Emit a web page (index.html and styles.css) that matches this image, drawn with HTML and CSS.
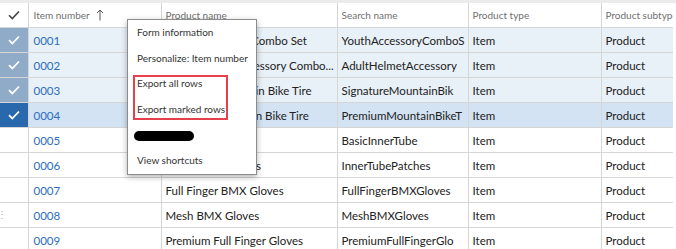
FILE: index.html
```html
<!DOCTYPE html>
<html lang="en">
<head>
  <meta charset="UTF-8" />
  <title>Released products</title>
  <link rel="stylesheet" href="styles.css">
</head>
<body>

  <div class="topband"></div>

  <div class="grid-wrap">
    <table class="grid">
      <colgroup>
        <col class="c-check" />
        <col class="c-item" />
        <col class="c-name" />
        <col class="c-search" />
        <col class="c-type" />
        <col class="c-subtype" />
      </colgroup>
      <thead>
        <tr>
          <th class="check-cell">
            <svg width="12" height="10" viewBox="0 0 12 10"><path d="M1 5.2 L4.3 8.5 L11 1.5" fill="none" stroke="#444" stroke-width="1.6"/></svg>
          </th>
          <th>Item number
            <svg class="sort" width="8" height="12" viewBox="0 0 8 12"><path d="M4 11.5 V1 M1 4 L4 1 L7 4" fill="none" stroke="#555" stroke-width="1"/></svg>
          </th>
          <th>Product name</th>
          <th>Search name</th>
          <th>Product type</th>
          <th>Product subtype</th>
        </tr>
      </thead>
      <tbody>
        <tr class="marked">
          <td class="check-cell"><svg width="12" height="10" viewBox="0 0 12 10"><path d="M1 5.2 L4.3 8.5 L11 1.5" fill="none" stroke="#fff" stroke-width="1.8"/></svg></td>
          <td><a href="#">0001</a></td>
          <td>Youth Accessory Combo Set</td>
          <td>YouthAccessoryComboS</td>
          <td>Item</td>
          <td>Product</td>
        </tr>
        <tr class="marked">
          <td class="check-cell"><svg width="12" height="10" viewBox="0 0 12 10"><path d="M1 5.2 L4.3 8.5 L11 1.5" fill="none" stroke="#fff" stroke-width="1.8"/></svg></td>
          <td><a href="#">0002</a></td>
          <td>Adult Helmet Accessory Combo...</td>
          <td>AdultHelmetAccessory</td>
          <td>Item</td>
          <td>Product</td>
        </tr>
        <tr class="marked">
          <td class="check-cell"><svg width="12" height="10" viewBox="0 0 12 10"><path d="M1 5.2 L4.3 8.5 L11 1.5" fill="none" stroke="#fff" stroke-width="1.8"/></svg></td>
          <td><a href="#">0003</a></td>
          <td>Signature Mountain Bike Tire</td>
          <td>SignatureMountainBik</td>
          <td>Item</td>
          <td>Product</td>
        </tr>
        <tr class="marked active">
          <td class="check-cell"><svg width="12" height="10" viewBox="0 0 12 10"><path d="M1 5.2 L4.3 8.5 L11 1.5" fill="none" stroke="#fff" stroke-width="1.8"/></svg></td>
          <td><a href="#">0004</a></td>
          <td>Premium Mountain Bike Tire</td>
          <td>PremiumMountainBikeT</td>
          <td>Item</td>
          <td>Product</td>
        </tr>
        <tr>
          <td class="check-cell"></td>
          <td><a href="#">0005</a></td>
          <td>Basic Inner Tube</td>
          <td>BasicInnerTube</td>
          <td>Item</td>
          <td>Product</td>
        </tr>
        <tr>
          <td class="check-cell"></td>
          <td><a href="#">0006</a></td>
          <td>Inner Tube Patches</td>
          <td>InnerTubePatches</td>
          <td>Item</td>
          <td>Product</td>
        </tr>
        <tr>
          <td class="check-cell"></td>
          <td><a href="#">0007</a></td>
          <td>Full Finger BMX Gloves</td>
          <td>FullFingerBMXGloves</td>
          <td>Item</td>
          <td>Product</td>
        </tr>
        <tr>
          <td class="check-cell"></td>
          <td><a href="#">0008</a></td>
          <td>Mesh BMX Gloves</td>
          <td>MeshBMXGloves</td>
          <td>Item</td>
          <td>Product</td>
        </tr>
        <tr>
          <td class="check-cell"></td>
          <td><a href="#">0009</a></td>
          <td>Premium Full Finger Gloves</td>
          <td>PremiumFullFingerGlo</td>
          <td>Item</td>
          <td>Product</td>
        </tr>
      </tbody>
    </table>

    <div class="grip">⋮</div>

    <div class="context-menu">
      <div class="menu-item">Form information</div>
      <div class="menu-item">Personalize: Item number</div>
      <div class="menu-item">Export all rows</div>
      <div class="menu-item">Export marked rows</div>
      <div class="menu-item"><span class="redacted"></span></div>
      <div class="menu-item">View shortcuts</div>
      <div class="highlight"></div>
    </div>
  </div>

</body>
</html>
```

FILE: styles.css
```css
body {
  margin: 0;
  background: #fff;
  font-family: "Lato", "Open Sans", sans-serif;
  color: #222;
}

.topband {
  height: 3px;
  background: #ebebeb;
}

.grid-wrap {
  position: relative;
  width: 673px;
  overflow: hidden;
}

.grid {
  border-collapse: collapse;
  table-layout: fixed;
  width: 740px;
  font-size: 11.5px;
}

.c-check { width: 28px; }
.c-item { width: 133px; }
.c-name { width: 176px; }
.c-search { width: 131px; }
.c-type { width: 133px; }
.c-subtype { width: 139px; }

.grid th,
.grid td {
  height: 24px;
  padding: 0 4px;
  border-right: 1px solid #d6d6d6;
  border-bottom: 1px solid #d6d6d6;
  white-space: nowrap;
  overflow: hidden;
  text-align: left;
  vertical-align: middle;
}

.grid th {
  font-size: 10px;
  font-weight: normal;
  color: #707070;
  background: #fff;
}

.grid td:nth-child(2),
.grid th:nth-child(2) {
  padding-left: 5px;
}

.grid .check-cell {
  padding: 0;
  text-align: center;
}

.check-cell svg {
  display: block;
  margin: 0 auto;
}

.sort {
  margin-left: 4px;
  vertical-align: -2px;
}

.grid a {
  color: #2a6ebd;
  text-decoration: none;
}

tr.marked td {
  background: #e8f0f8;
}

tr.marked td.check-cell {
  background: #8fabc8;
}

tr.active td {
  background: #d3e3f3;
}

tr.active td.check-cell {
  background: #2a68ae;
}

.grip {
  position: absolute;
  left: -3px;
  top: 205px;
  font-size: 10px;
  color: #b0b0b0;
}

.context-menu {
  position: absolute;
  left: 127px;
  top: 16px;
  width: 128px;
  background: #fff;
  border: 1px solid #8c8c8c;
  box-shadow: 0 2px 6px rgba(0, 0, 0, 0.3);
  font-size: 10px;
  color: #333;
}

.menu-item {
  height: 25.6px;
  line-height: 25.6px;
  padding-left: 9px;
  white-space: nowrap;
}

.redacted {
  display: inline-block;
  width: 60px;
  height: 10px;
  margin-left: -3px;
  border-radius: 5px;
  background: #000;
  vertical-align: middle;
}

.highlight {
  position: absolute;
  left: 5px;
  top: 55px;
  width: 91px;
  height: 41px;
  border: 2px solid #e5404c;
}
```
